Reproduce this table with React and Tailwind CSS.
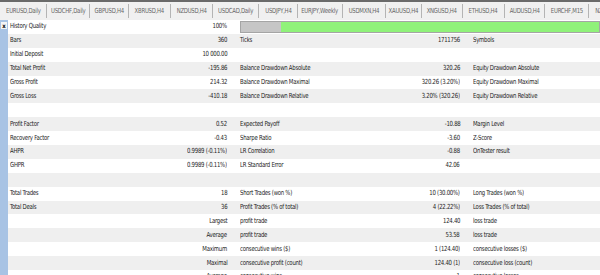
const TABS = [
  ["EURUSD,Daily", "w-[47px]"],
  ["USDCHF,Daily", "w-[43px]"],
  ["GBPUSD,H4", "w-[39px]"],
  ["XBRUSD,H4", "w-[42px]"],
  ["NZDUSD,H4", "w-[42px]"],
  ["USDCAD,Daily", "w-[46px]"],
  ["USDJPY,H4", "w-[39px]"],
  ["EURJPY,Weekly", "w-[45px]"],
  ["USDMXN,H4", "w-[43px]"],
  ["XAUUSD,H4", "w-[36px]"],
  ["XNGUSD,H4", "w-[41px]"],
  ["ETHUSD,H4", "w-[42px]"],
  ["AUDUSD,H4", "w-[40px]"],
  ["EURCHF,M15", "w-[44px]"],
  ["NZDJPY,H4", "w-[40px]"],
];

const ROWS = [
  ["History Quality", "100%", "bar"],
  ["Bars", "360", "Ticks", "1711756", "Symbols"],
  ["Initial Deposit", "10\u00a0000.00", "", "", ""],
  ["Total Net Profit", "-195.86", "Balance Drawdown Absolute", "320.26", "Equity Drawdown Absolute"],
  ["Gross Profit", "214.32", "Balance Drawdown Maximal", "320.26 (3.20%)", "Equity Drawdown Maximal"],
  ["Gross Loss", "-410.18", "Balance Drawdown Relative", "3.20% (320.26)", "Equity Drawdown Relative"],
  ["", "", "", "", ""],
  ["Profit Factor", "0.52", "Expected Payoff", "-10.88", "Margin Level"],
  ["Recovery Factor", "-0.43", "Sharpe Ratio", "-3.60", "Z-Score"],
  ["AHPR", "0.9989 (-0.11%)", "LR Correlation", "-0.88", "OnTester result"],
  ["GHPR", "0.9989 (-0.11%)", "LR Standard Error", "42.06", ""],
  ["", "", "", "", ""],
  ["Total Trades", "18", "Short Trades (won %)", "10 (30.00%)", "Long Trades (won %)"],
  ["Total Deals", "36", "Profit Trades (% of total)", "4 (22.22%)", "Loss Trades (% of total)"],
  ["", "Largest", "profit trade", "124.40", "loss trade"],
  ["", "Average", "profit trade", "53.58", "loss trade"],
  ["", "Maximum", "consecutive wins ($)", "1 (124.40)", "consecutive losses ($)"],
  ["", "Maximal", "consecutive profit (count)", "124.40 (1)", "consecutive loss (count)"],
  ["", "Average", "consecutive wins", "1", "consecutive losses"],
];

// the report font is squeezed sideways, so each text gets a narrow scale
function L({ children }) {
  return <span className="inline-block origin-left scale-x-[0.85]">{children}</span>;
}

function R({ children }) {
  return <span className="inline-block origin-right scale-x-[0.85]">{children}</span>;
}

function Row({ cells, index }) {
  const bg = index % 2 === 0 ? "bg-white" : "bg-[#efefef]";
  if (cells[2] === "bar") {
    return (
      <div className={`flex h-[13.9px] items-center whitespace-nowrap ${bg}`}>
        <div className="w-[140px] shrink-0 pl-[2px]"><L>{cells[0]}</L></div>
        <div className="w-[79px] shrink-0 text-right"><R>{cells[1]}</R></div>
        <div className="ml-[13px] flex h-[12px] flex-1 border border-[#a5a5a5]">
          <div className="w-[40px] bg-[#c6c6c6]" />
          <div className="flex-1 bg-[#90f27a]" />
        </div>
      </div>
    );
  }
  return (
    <div className={`flex h-[13.9px] items-center whitespace-nowrap ${bg}`}>
      <div className="w-[140px] shrink-0 pl-[2px]"><L>{cells[0]}</L></div>
      <div className="w-[79px] shrink-0 text-right"><R>{cells[1]}</R></div>
      <div className="ml-[13px] w-[150px] shrink-0"><L>{cells[2]}</L></div>
      <div className="w-[70px] shrink-0 text-right"><R>{cells[3]}</R></div>
      <div className="ml-[13px] w-[150px] shrink-0"><L>{cells[4]}</L></div>
    </div>
  );
}

export default function App() {
  return (
    <div
      className="h-[275px] w-[600px] overflow-hidden bg-white text-[7px] leading-none tracking-[-0.3px] text-[#1c1c1c]"
      style={{ fontFamily: '"DejaVu Sans Condensed", "Liberation Sans", sans-serif' }}
    >
      <div className="flex h-[20px] items-center overflow-hidden border-t-2 border-[#6a6a6a] bg-[#f0f0f0] text-[#666666]">
        {TABS.map(([tab, w]) => (
          <div
            key={tab}
            className={`flex h-[14px] shrink-0 items-center justify-center border-r border-[#b4b4b4] whitespace-nowrap ${w}`}
          >
            <span className="inline-block scale-x-[0.85]">{tab}</span>
          </div>
        ))}
      </div>
      <div className="flex">
        <div className="w-[8px] shrink-0 bg-[#a8c3e4]">
          <div className="mx-auto mt-[2px] flex h-[7px] w-[6px] items-center justify-center bg-[#f4f4f4] text-[6px] font-bold tracking-normal text-black">
            x
          </div>
        </div>
        <div className="flex-1 overflow-hidden">
          {ROWS.map((cells, i) => (
            <Row key={i} cells={cells} index={i} />
          ))}
        </div>
      </div>
    </div>
  );
}
